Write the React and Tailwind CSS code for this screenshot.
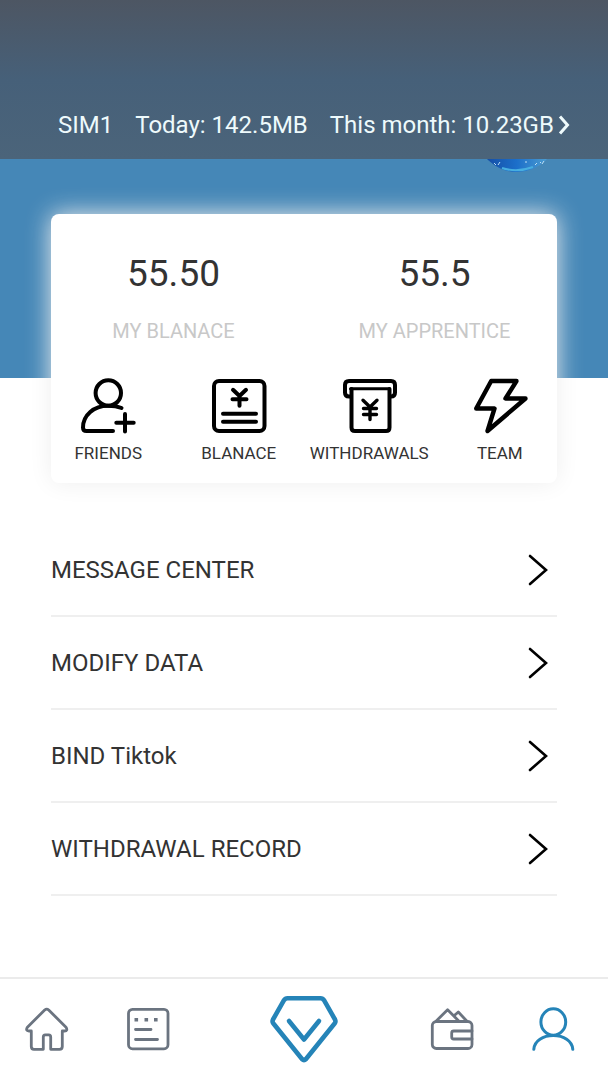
const actions = [
  { label: 'FRIENDS', Icon: FriendsIcon },
  { label: 'BLANACE', Icon: BalanceIcon },
  { label: 'WITHDRAWALS', Icon: WithdrawIcon },
  { label: 'TEAM', Icon: BoltIcon },
]

const stats = [
  { value: '55.50', label: 'MY BLANACE' },
  { value: '55.5', label: 'MY APPRENTICE' },
]

const menu = ['MESSAGE CENTER', 'MODIFY DATA', 'BIND Tiktok', 'WITHDRAWAL RECORD']

function ActionSvg({ children }) {
  return (
    <svg
      className="w-14 h-14"
      viewBox="0 0 56 56"
      fill="none"
      stroke="currentColor"
      strokeWidth="4"
      strokeLinecap="round"
      strokeLinejoin="round"
      aria-hidden="true"
    >
      {children}
    </svg>
  )
}

function FriendsIcon() {
  return (
    <ActionSvg>
      <circle cx="28.3" cy="15" r="12.7" />
      <path d="M41.5 30C37.5 28.3 33 27.7 28 27.7 14 27.7 3 37 3 49.5Q3 53 6.5 53H33" />
      <path d="M45 36v17.4M36.3 44.7h17.4" />
    </ActionSvg>
  )
}

function BalanceIcon() {
  return (
    <ActionSvg>
      <rect x="3" y="3" width="50.5" height="50" rx="5" />
      <path d="M22 11.8l6.5 6.2 6.5-6.2M28.5 18v9.7M21.5 21.3h14" strokeWidth="4" />
      <path d="M12 35.7h33M12 43.7h33" />
    </ActionSvg>
  )
}

function WithdrawIcon() {
  return (
    <ActionSvg>
      <path d="M9 18.5H8Q4 18.5 4 14.5V7Q4 3 8 3H50Q54 3 54 7v7.5Q54 18.5 50 18.5H49" />
      <path d="M9.5 10.7h39" strokeWidth="3" />
      <path d="M10.5 11v38.5Q10.5 53 14 53H45Q48.5 53 48.5 49.5V11" />
      <path d="M22 22.3l7 6.7 7-6.7M29 29v12.5M22.5 30.5h13M22.5 36.5h13" strokeWidth="3.4" />
    </ActionSvg>
  )
}

function BoltIcon() {
  return (
    <ActionSvg>
      <path d="M19.2 3H44.5L33.5 20.5H53.5L15.5 53 22.5 30.5H4.2z" strokeWidth="4.4" />
    </ActionSvg>
  )
}

function TabSvg({ children }) {
  return (
    <svg
      className="w-11 h-11"
      viewBox="0 0 44 44"
      fill="none"
      stroke="currentColor"
      strokeWidth="2.8"
      strokeLinecap="round"
      strokeLinejoin="round"
      aria-hidden="true"
    >
      {children}
    </svg>
  )
}

function HomeIcon() {
  return (
    <TabSvg>
      <path d="M19.7 3Q21.7 1.2 23.7 3L41 20.2Q43.2 23.8 39.5 24H37.3V39.5Q37.3 42.3 34.5 42.3H25.7V30Q25.7 27.8 23.7 27.8H20.3Q18.3 27.8 18.3 30V42.3H9Q6.3 42.3 6.3 39.5V24H4Q.2 23.8 2.4 20.2z" />
    </TabSvg>
  )
}

function TasksIcon() {
  return (
    <TabSvg>
      <rect x="1.5" y="2.3" width="39.5" height="39.5" rx="4" />
      <path d="M7.5 11h3.6v3.6H7.5zM17.5 11h3.6v3.6h-3.6zM27 11h3.6v3.6H27z" fill="currentColor" stroke="none" />
      <path d="M8.5 22.5h15.5M8.5 32.5h22" />
    </TabSvg>
  )
}

function WalletIcon() {
  return (
    <TabSvg>
      <rect x="2.3" y="14.5" width="39.7" height="27" rx="4" />
      <path d="M42 24H23.7Q21.7 24 21.7 26V30Q21.7 32 23.7 32H42" />
      <path d="M6.5 13.7L17.6 2.8 28.5 13.7M24 8.8L28.3 5 36.5 13.7" />
    </TabSvg>
  )
}

function ProfileIcon() {
  return (
    <TabSvg>
      <ellipse cx="21.3" cy="15" rx="12.4" ry="13.2" strokeWidth="3" />
      <path d="M1.8 42.3C2.5 34 11 28.6 21.3 28.6S40.1 34 40.8 42.3" strokeWidth="3" />
    </TabSvg>
  )
}

function DiamondIcon() {
  return (
    <svg
      className="w-[68px] h-[68px]"
      viewBox="0 0 68 68"
      fill="none"
      stroke="currentColor"
      strokeWidth="4.6"
      strokeLinecap="round"
      strokeLinejoin="round"
      aria-hidden="true"
    >
      <path d="M17.5 3.2H50.5Q52.8 3.2 54 5.2L65 24.5Q66 26.4 64.8 28.2L36 64Q34 66 32 64L3.2 28.2Q2 26.4 3 24.5L14 5.2Q15.2 3.2 17.5 3.2z" />
      <path d="M19 26L34 44.5 49 26" />
    </svg>
  )
}

function StatusBar() {
  return (
    <header className="bg-linear-to-b from-[#4d5663] via-[#466079] to-[#4b647a] pt-[109px] pb-[18px] pl-[58px] pr-9">
      <button className="flex items-center gap-[22px] text-2xl leading-8 text-[#eefafc] whitespace-nowrap">
        <span>SIM1</span>
        <span>Today: 142.5MB</span>
        <span className="flex items-center gap-1">
          This month: 10.23GB
          <svg className="w-3 h-5" viewBox="0 0 12 20" fill="none" stroke="currentColor" strokeWidth="3" aria-hidden="true">
            <path d="M2 1.5L9.5 10 2 18.5" />
          </svg>
        </span>
      </button>
    </header>
  )
}

function Avatar() {
  return (
    <svg className="absolute right-[50px] -top-[69px] w-[82px] h-[82px]" viewBox="0 0 82 82" aria-hidden="true">
      <defs>
        <linearGradient id="avatar" x1="0" x2="1">
          <stop offset="0.15" stopColor="#1550a8" />
          <stop offset="0.5" stopColor="#1c6fca" />
          <stop offset="0.85" stopColor="#4a9ad0" />
        </linearGradient>
      </defs>
      <circle cx="41" cy="41" r="41" fill="url(#avatar)" />
      <path d="M18 73l2 2M24 72l-2 3M50 71v2M59 75l2-2M64 72l1 1M68 71l-2 3" stroke="#bfe0f5" strokeWidth="1" />
      <path d="M26 78Q41 83 57 77" stroke="#47aee0" strokeWidth="2" fill="none" />
    </svg>
  )
}

function TabLink({ label, active, children }) {
  return (
    <a href="#" aria-label={label} className={active ? 'text-[#2584b8]' : 'text-[#6b7480]'}>
      {children}
    </a>
  )
}

export default function App() {
  return (
    <div className="min-h-screen flex flex-col bg-white font-['Roboto',sans-serif] text-[#333]">
      <StatusBar />
      <div className="relative overflow-hidden h-[219px] bg-[#4587b7]">
        <Avatar />
      </div>

      <main className="px-[51px]">
        <section className="relative -mt-[164px] rounded-lg bg-white pt-10 pb-[18px] shadow-[0_0_24px_#eeeeee]">
          <div className="-mx-2 grid grid-cols-2 text-center">
            {stats.map(s => (
              <div key={s.label}>
                <div className="text-[37px] leading-10">{s.value}</div>
                <div className="mt-[25px] text-xl leading-6 text-[#c8c8c8]">{s.label}</div>
              </div>
            ))}
          </div>
          <div className="-mx-2 mt-[35px] grid grid-cols-4">
            {actions.map(({ label, Icon }) => (
              <a key={label} href="#" className="flex flex-col items-center">
                <span className="text-black">
                  <Icon />
                </span>
                <span className="mt-[7px] text-[17px] leading-6">{label}</span>
              </a>
            ))}
          </div>
        </section>

        <ul className="mt-[41px]">
          {menu.map(item => (
            <li key={item} className="border-b-2 border-[#efefef]">
              <a href="#" className="flex items-center justify-between h-[91px] pr-[9px] text-2xl leading-8">
                {item}
                <svg
                  className="w-5 h-8 text-black"
                  viewBox="0 0 20 32"
                  fill="none"
                  stroke="currentColor"
                  strokeWidth="2.6"
                  strokeLinecap="round"
                  aria-hidden="true"
                >
                  <path d="M2 2l16 14L2 30" />
                </svg>
              </a>
            </li>
          ))}
        </ul>
      </main>

      <nav className="mt-auto grid grid-cols-[1fr_68px_1fr] items-center border-t-2 border-[#ebebeb] pt-4 pb-[17px]">
        <div className="flex gap-[58px] pl-[25px]">
          <TabLink label="Home"><HomeIcon /></TabLink>
          <TabLink label="Tasks"><TasksIcon /></TabLink>
        </div>
        <TabLink label="Discover" active><DiamondIcon /></TabLink>
        <div className="flex justify-end gap-[58px] pr-8">
          <TabLink label="Wallet"><WalletIcon /></TabLink>
          <TabLink label="Profile" active><ProfileIcon /></TabLink>
        </div>
      </nav>
    </div>
  )
}
